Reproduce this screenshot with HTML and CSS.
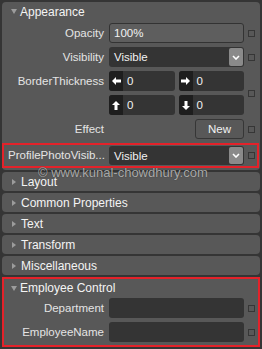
FILE: index.html
```html
<!DOCTYPE html>
<html>

<head>
  <title>Properties</title>
  <link rel="stylesheet" href="styles.css">
</head>

<body>
  <div class="panel">
    <div class="head"><span class="tri down"></span>Appearance</div>
    <div class="rows">
      <div class="row">
        <label>Opacity</label>
        <div class="field light">100%</div>
        <span class="chk"></span>
      </div>
      <div class="row">
        <label>Visibility</label>
        <div class="field">Visible
          <span class="drop"><svg width="8" height="5" viewBox="0 0 8 5"><path d="M1 1 L4 4 L7 1" fill="none" stroke="#fff" stroke-width="1.6"/></svg></span>
        </div>
        <span class="chk"></span>
      </div>
      <div class="row tall">
        <label>BorderThickness</label>
        <div class="thick">
          <div class="num"><span class="ico"><svg width="9" height="8" viewBox="0 0 9 8"><path d="M0 4 L4 0 L4 2.5 L9 2.5 L9 5.5 L4 5.5 L4 8 Z" fill="#fff"/></svg></span>0</div>
          <div class="num"><span class="ico"><svg width="9" height="8" viewBox="0 0 9 8"><path d="M9 4 L5 0 L5 2.5 L0 2.5 L0 5.5 L5 5.5 L5 8 Z" fill="#fff"/></svg></span>0</div>
          <div class="num"><span class="ico"><svg width="8" height="9" viewBox="0 0 8 9"><path d="M4 0 L0 4 L2.5 4 L2.5 9 L5.5 9 L5.5 4 L8 4 Z" fill="#fff"/></svg></span>0</div>
          <div class="num"><span class="ico"><svg width="8" height="9" viewBox="0 0 8 9"><path d="M4 9 L0 5 L2.5 5 L2.5 0 L5.5 0 L5.5 5 L8 5 Z" fill="#fff"/></svg></span>0</div>
        </div>
        <span class="chk"></span>
      </div>
      <div class="row">
        <label>Effect</label>
        <div class="field plain"><button class="btn">New</button></div>
        <span class="chk"></span>
      </div>
      <div class="row marked">
        <label>ProfilePhotoVisib...</label>
        <div class="field">Visible
          <span class="drop"><svg width="8" height="5" viewBox="0 0 8 5"><path d="M1 1 L4 4 L7 1" fill="none" stroke="#fff" stroke-width="1.6"/></svg></span>
        </div>
        <span class="chk"></span>
      </div>
    </div>
  </div>

  <div class="panel"><div class="head"><span class="tri right"></span>Layout</div></div>
  <div class="panel"><div class="head"><span class="tri right"></span>Common Properties</div></div>
  <div class="panel"><div class="head"><span class="tri right"></span>Text</div></div>
  <div class="panel"><div class="head"><span class="tri right"></span>Transform</div></div>
  <div class="panel"><div class="head"><span class="tri right"></span>Miscellaneous</div></div>

  <div class="panel boxed">
    <div class="head"><span class="tri down"></span>Employee Control</div>
    <div class="rows">
      <div class="row">
        <label>Department</label>
        <div class="field"></div>
        <span class="chk"></span>
      </div>
      <div class="row">
        <label>EmployeeName</label>
        <div class="field"></div>
        <span class="chk"></span>
      </div>
    </div>
  </div>

  <div class="mark">© www.kunal-chowdhury.com</div>
</body>

</html>
```
FILE: styles.css
```css
html {
  background-color: #353535;
}

body {
  margin: 0;
  padding: 2px;
  position: relative;
  font-family: 'Liberation Sans', Arial, sans-serif;
  font-size: 11.5px;
  color: #e4e4e4;
}

.panel {
  background-color: #585858;
  border-radius: 4px;
  margin-bottom: 2px;
}

.head {
  height: 19px;
  display: flex;
  align-items: center;
  padding-left: 9px;
  font-size: 12px;
  color: #f4f4f4;
}

.tri {
  width: 0;
  height: 0;
}

.tri.down {
  border-left: 3.5px solid transparent;
  border-right: 3.5px solid transparent;
  border-top: 5px solid #9c9c9c;
  margin-right: 3px;
}

.tri.right {
  border-top: 3.5px solid transparent;
  border-bottom: 3.5px solid transparent;
  border-left: 4px solid #9c9c9c;
  margin-left: 1px;
  margin-right: 5px;
}

.rows {
  padding: 2px 5px 2px 6px;
}

.row {
  display: flex;
  align-items: center;
  margin-bottom: 4px;
}

.row:last-child {
  margin-bottom: 0;
}

.row label {
  width: 96px;
  margin-right: 5px;
  text-align: right;
  line-height: 20px;
  white-space: nowrap;
}

.row.tall {
  align-items: flex-start;
}

.row.tall .chk {
  align-self: center;
}

.field {
  width: 135px;
  height: 20px;
  box-sizing: border-box;
  display: flex;
  align-items: center;
  padding-left: 5px;
  background-color: #343434;
  border-radius: 3px;
  color: #f2f2f2;
}

.field.light {
  background-color: #5e5e5e;
  border: 1px solid #333333;
  padding-left: 4px;
}

.field.plain {
  background: none;
  padding: 0;
}

.drop {
  width: 14px;
  height: 18px;
  margin-left: auto;
  margin-right: 1px;
  display: flex;
  align-items: center;
  justify-content: center;
  background-color: #8a8a8a;
  border-radius: 2px;
}

.chk {
  width: 7px;
  height: 7px;
  box-sizing: border-box;
  margin-left: 4px;
  border: 1px solid #363636;
}

.thick {
  width: 135px;
  display: grid;
  grid-template-columns: 1fr 1fr;
  gap: 4px;
}

.num {
  height: 20px;
  display: flex;
  align-items: center;
  background-color: #343434;
  border-radius: 3px;
  overflow: hidden;
  color: #f2f2f2;
}

.ico {
  width: 14px;
  height: 100%;
  margin-right: 4px;
  display: flex;
  align-items: center;
  justify-content: center;
  background-color: #1e1e1e;
}

.btn {
  width: 49px;
  height: 20px;
  margin-left: auto;
  background-color: #585858;
  border: 1px solid #363636;
  border-radius: 3px;
  color: #f2f2f2;
  font-family: inherit;
  font-size: 11.5px;
}

.row.marked {
  margin: 3px -4px 0 -6px;
  padding: 1px 2px 1px 4px;
  border: 2px solid #e4222a;
}

.row.marked label {
  line-height: 19px;
}

.row.marked .field {
  height: 19px;
}

.row.marked .drop {
  height: 17px;
}

.panel.boxed {
  border: 2px solid #e4222a;
  border-radius: 0;
  margin-bottom: 0;
}

.panel.boxed .head {
  height: 18px;
  padding-left: 7px;
}

.panel.boxed .rows {
  padding: 1px 3px 3px 4px;
}

.mark {
  position: absolute;
  top: 165px;
  left: 38px;
  font-size: 13px;
  color: rgba(200, 200, 200, 0.8);
  text-shadow: 0 0 1px #2a2a2a;
  white-space: nowrap;
}
```
